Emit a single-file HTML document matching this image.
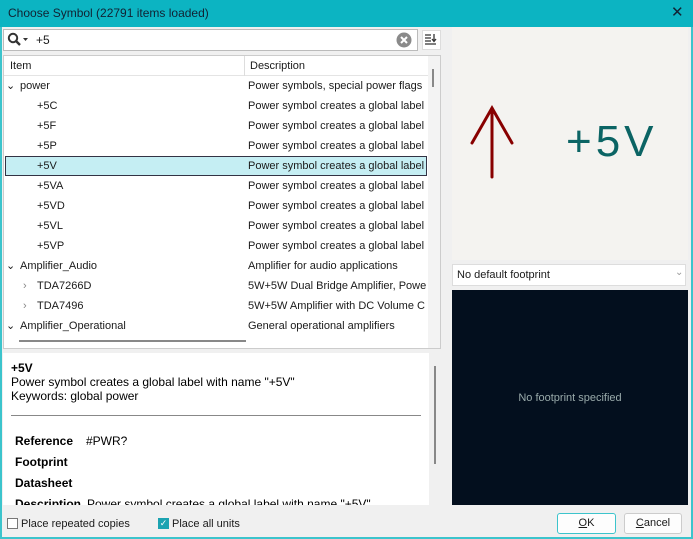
<!DOCTYPE html><html><head><style>
*{margin:0;padding:0;box-sizing:border-box}
body{width:693px;height:539px;background:#f0f0f0;font-family:"Liberation Sans",sans-serif;font-size:11px;color:#1a1a1a;position:relative;overflow:hidden}
.a{position:absolute}
.row{position:absolute;left:5px;width:422px;height:20px;line-height:20px;white-space:nowrap;overflow:hidden}
.row span{position:absolute;white-space:nowrap}
.d{left:243px}
</style></head><body>
<div class="a" style="left:0;top:0;width:693px;height:27px;background:#0cb4c2"></div>
<div class="a" style="left:8px;top:6px;color:#123;font-size:12px">Choose Symbol (22791 items loaded)</div>
<div class="a" style="left:671px;top:3px;font-size:15px;color:#123">✕</div>
<div class="a" style="left:0;top:27px;width:2px;height:512px;background:#3cc4cc"></div>
<div class="a" style="left:691px;top:27px;width:2px;height:512px;background:#3cc4cc"></div>
<div class="a" style="left:0;top:537px;width:693px;height:2px;background:#3cc4cc"></div>

<div class="a" style="left:3px;top:29px;width:415px;height:22px;background:#fff;border:1px solid #bbb"></div>
<svg class="a" style="left:7px;top:32px" width="24" height="16"><circle cx="6" cy="6" r="4.2" fill="none" stroke="#333" stroke-width="2"/><line x1="9" y1="9" x2="13" y2="13" stroke="#333" stroke-width="2.4"/><path d="M16 6l5 0l-2.5 3z" fill="#333"/></svg>
<div class="a" style="left:36px;top:33px;font-size:12px">+5</div>
<svg class="a" style="left:396px;top:32px" width="16" height="16"><circle cx="8" cy="8" r="7.5" fill="#8a8a8a"/><path d="M5 5l6 6M11 5l-6 6" stroke="#fff" stroke-width="2"/></svg>
<div class="a" style="left:422px;top:30px;width:19px;height:20px;background:#fff;border:1px solid #ddd"></div>
<svg class="a" style="left:424px;top:33px" width="15" height="14"><path d="M1 2h6M1 5h6M1 8h6M1 11h11" stroke="#333" stroke-width="1.3"/><path d="M10 1v7M8 6l2 2.5 2-2.5" stroke="#333" stroke-width="1.3" fill="none"/></svg>

<div class="a" style="left:3px;top:55px;width:438px;height:294px;background:#fff;border:1px solid #ccc"></div>
<div class="a" style="left:4px;top:56px;width:424px;height:20px;background:#fff;border-bottom:1px solid #e4e4e4"></div>
<div class="a" style="left:244px;top:56px;width:1px;height:20px;background:#ddd"></div>
<div class="a" style="left:10px;top:60px">Item</div>
<div class="a" style="left:250px;top:60px">Description</div>
<div class="a" style="left:428px;top:56px;width:12px;height:292px;background:#f3f3f3"></div>
<div class="a" style="left:432px;top:69px;width:2px;height:18px;background:#888"></div>
<div class="a" style="left:19px;top:340px;width:227px;height:2px;background:#888"></div>
<div class="a" style="left:5px;top:156px;width:422px;height:20px;background:#c5eef3;border:1px solid #334"></div>

<div class="row" style="top:76px"><span style="left:1px">⌄</span><span style="left:15px">power</span><span class="d">Power symbols, special power flags</span></div>
<div class="row" style="top:96px"><span style="left:32px">+5C</span><span class="d">Power symbol creates a global label w</span></div>
<div class="row" style="top:116px"><span style="left:32px">+5F</span><span class="d">Power symbol creates a global label w</span></div>
<div class="row" style="top:136px"><span style="left:32px">+5P</span><span class="d">Power symbol creates a global label w</span></div>
<div class="row" style="top:156px"><span style="left:32px">+5V</span><span class="d">Power symbol creates a global label w</span></div>
<div class="row" style="top:176px"><span style="left:32px">+5VA</span><span class="d">Power symbol creates a global label w</span></div>
<div class="row" style="top:196px"><span style="left:32px">+5VD</span><span class="d">Power symbol creates a global label w</span></div>
<div class="row" style="top:216px"><span style="left:32px">+5VL</span><span class="d">Power symbol creates a global label w</span></div>
<div class="row" style="top:236px"><span style="left:32px">+5VP</span><span class="d">Power symbol creates a global label w</span></div>
<div class="row" style="top:256px"><span style="left:1px">⌄</span><span style="left:15px">Amplifier_Audio</span><span class="d">Amplifier for audio applications</span></div>
<div class="row" style="top:276px"><span style="left:18px;color:#888">›</span><span style="left:32px">TDA7266D</span><span class="d">5W+5W Dual Bridge Amplifier, Powe</span></div>
<div class="row" style="top:296px"><span style="left:18px;color:#888">›</span><span style="left:32px">TDA7496</span><span class="d">5W+5W Amplifier with DC Volume C</span></div>
<div class="row" style="top:316px"><span style="left:1px">⌄</span><span style="left:15px">Amplifier_Operational</span><span class="d">General operational amplifiers</span></div>

<div class="a" style="left:3px;top:353px;width:426px;height:152px;background:#fff;font-size:12px;color:#000;overflow:hidden">
<div class="a" style="left:8px;top:8px;font-weight:bold">+5V</div>
<div class="a" style="left:8px;top:22px">Power symbol creates a global label with name "+5V"</div>
<div class="a" style="left:8px;top:36px">Keywords: global power</div>
<div class="a" style="left:8px;top:62px;width:410px;height:1px;background:#888"></div>
<div class="a" style="left:12px;top:81px;font-weight:bold">Reference</div><div class="a" style="left:83px;top:81px">#PWR?</div>
<div class="a" style="left:12px;top:102px;font-weight:bold">Footprint</div>
<div class="a" style="left:12px;top:123px;font-weight:bold">Datasheet</div>
<div class="a" style="left:12px;top:144px;font-weight:bold">Description</div><div class="a" style="left:84px;top:144px;white-space:nowrap">Power symbol creates a global label with name "+5V"</div>
</div>
<div class="a" style="left:434px;top:366px;width:2px;height:98px;background:#888"></div>

<div class="a" style="left:452px;top:27px;width:236px;height:233px;background:#f4f3f0"></div>
<svg class="a" style="left:452px;top:27px" width="236" height="233"><path d="M40 150V81M20 116L40 81L60 116" stroke="#800" stroke-width="3" fill="none" stroke-linecap="round"/></svg>
<div class="a" style="left:566px;top:112px;font-size:44px;color:#0b6464;letter-spacing:4px;line-height:60px">+5V</div>
<div class="a" style="left:452px;top:264px;width:234px;height:22px;background:#fff;border:1px solid #ddd"></div>
<div class="a" style="left:457px;top:269px;font-size:11px">No default footprint</div>
<div class="a" style="left:675px;top:267px;color:#999;font-size:10px">⌄</div>
<div class="a" style="left:452px;top:290px;width:236px;height:215px;background:#030f1e"></div>
<div class="a" style="left:452px;top:392px;width:236px;text-align:center;color:#9aa;font-size:11px">No footprint specified</div>

<div class="a" style="left:7px;top:518px;width:11px;height:11px;border:1px solid #777;background:#fff"></div>
<div class="a" style="left:21px;top:518px">Place repeated copies</div>
<div class="a" style="left:158px;top:518px;width:11px;height:11px;background:#1ca3b1;color:#fff;font-size:9px;line-height:11px;text-align:center">✓</div>
<div class="a" style="left:172px;top:518px">Place all units</div>
<div class="a" style="left:557px;top:513px;width:59px;height:21px;background:#fdfdfd;border:1px solid #3cc4cc;border-radius:3px;text-align:center;line-height:19px"><u>O</u>K</div>
<div class="a" style="left:624px;top:513px;width:58px;height:21px;background:#fdfdfd;border:1px solid #ccc;border-radius:3px;text-align:center;line-height:19px"><u>C</u>ancel</div>
</body></html>
